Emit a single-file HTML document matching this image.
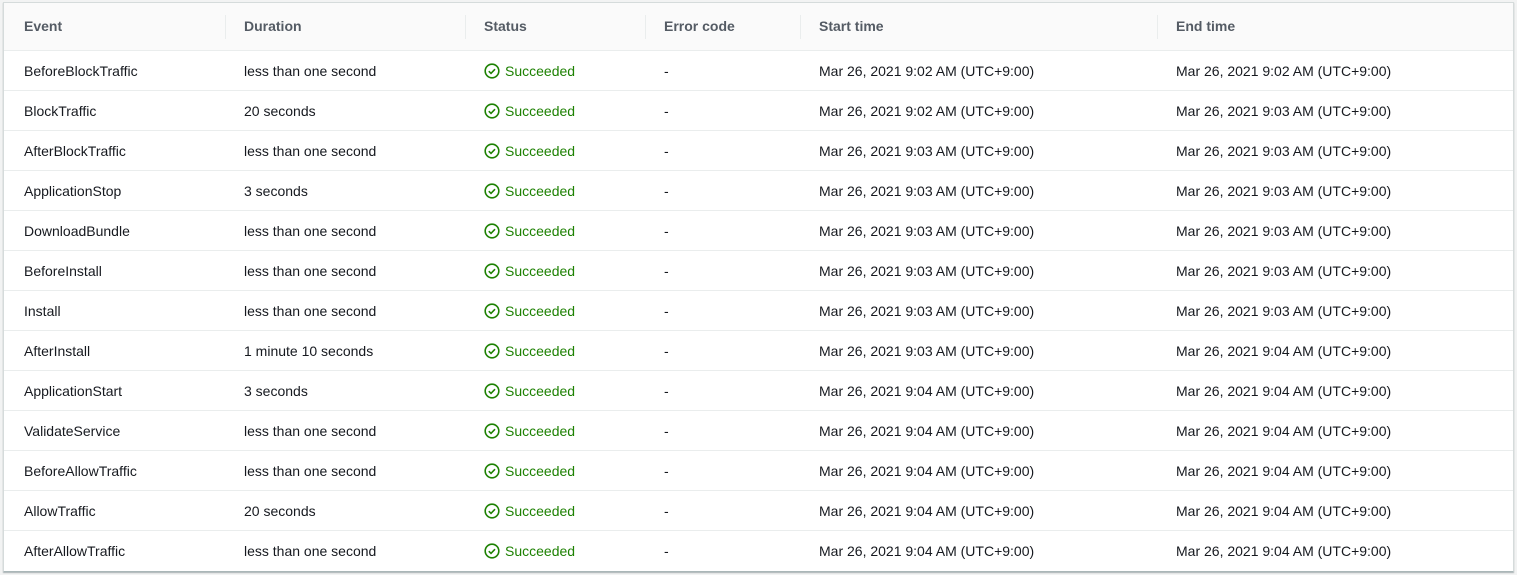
<!DOCTYPE html>
<html><head><style>
body{margin:0;background:#f2f3f3;font-family:"Liberation Sans",sans-serif;}
.box{position:absolute;left:3px;top:2px;width:1509px;height:568px;background:#fff;border:1px solid #d5dbdb;border-bottom-color:#aab7b8;box-shadow:0 1px 1px rgba(0,28,36,.3);overflow:hidden}
.hdr{position:absolute;left:0;top:0;width:100%;height:47px;background:#fafafa;border-bottom:1px solid #eaeded;}
.c{position:absolute;white-space:nowrap;font-size:14px;color:#16191f;line-height:16px}
.h{font-weight:bold;color:#545b64;top:15px}
.div{position:absolute;top:12px;height:24px;width:1px;background:#eaeded}
.row{position:absolute;left:0;width:100%;height:39px;border-bottom:1px solid #eaeded}
.row .c{top:12px}
.ok{color:#1d8102}
.ok svg{position:absolute;left:0;top:0}
.ok span{position:absolute;left:21px;top:0}
</style></head><body><div class="box">
<div class="hdr">
<div class="c h" style="left:20px">Event</div><div class="div" style="left:221px"></div>
<div class="c h" style="left:240px">Duration</div><div class="div" style="left:461px"></div>
<div class="c h" style="left:480px">Status</div><div class="div" style="left:641px"></div>
<div class="c h" style="left:660px">Error code</div><div class="div" style="left:796px"></div>
<div class="c h" style="left:815px">Start time</div><div class="div" style="left:1153px"></div>
<div class="c h" style="left:1172px">End time</div>
</div>

<div class="row" style="top:48px"><div class="c" style="left:20px">BeforeBlockTraffic</div><div class="c" style="left:240px">less than one second</div><div class="c ok" style="left:480px"><svg width="16" height="16" viewBox="0 0 16 16"><circle cx="8" cy="8" r="6.8" fill="none" stroke="#1d8102" stroke-width="1.6"/><path d="M4.8 8.2l2.2 2.2 4-4.2" fill="none" stroke="#1d8102" stroke-width="1.6"/></svg><span>Succeeded</span></div><div class="c" style="left:660px">-</div><div class="c" style="left:815px">Mar 26, 2021 9:02 AM (UTC+9:00)</div><div class="c" style="left:1172px">Mar 26, 2021 9:02 AM (UTC+9:00)</div></div>

<div class="row" style="top:88px"><div class="c" style="left:20px">BlockTraffic</div><div class="c" style="left:240px">20 seconds</div><div class="c ok" style="left:480px"><svg width="16" height="16" viewBox="0 0 16 16"><circle cx="8" cy="8" r="6.8" fill="none" stroke="#1d8102" stroke-width="1.6"/><path d="M4.8 8.2l2.2 2.2 4-4.2" fill="none" stroke="#1d8102" stroke-width="1.6"/></svg><span>Succeeded</span></div><div class="c" style="left:660px">-</div><div class="c" style="left:815px">Mar 26, 2021 9:02 AM (UTC+9:00)</div><div class="c" style="left:1172px">Mar 26, 2021 9:03 AM (UTC+9:00)</div></div>

<div class="row" style="top:128px"><div class="c" style="left:20px">AfterBlockTraffic</div><div class="c" style="left:240px">less than one second</div><div class="c ok" style="left:480px"><svg width="16" height="16" viewBox="0 0 16 16"><circle cx="8" cy="8" r="6.8" fill="none" stroke="#1d8102" stroke-width="1.6"/><path d="M4.8 8.2l2.2 2.2 4-4.2" fill="none" stroke="#1d8102" stroke-width="1.6"/></svg><span>Succeeded</span></div><div class="c" style="left:660px">-</div><div class="c" style="left:815px">Mar 26, 2021 9:03 AM (UTC+9:00)</div><div class="c" style="left:1172px">Mar 26, 2021 9:03 AM (UTC+9:00)</div></div>

<div class="row" style="top:168px"><div class="c" style="left:20px">ApplicationStop</div><div class="c" style="left:240px">3 seconds</div><div class="c ok" style="left:480px"><svg width="16" height="16" viewBox="0 0 16 16"><circle cx="8" cy="8" r="6.8" fill="none" stroke="#1d8102" stroke-width="1.6"/><path d="M4.8 8.2l2.2 2.2 4-4.2" fill="none" stroke="#1d8102" stroke-width="1.6"/></svg><span>Succeeded</span></div><div class="c" style="left:660px">-</div><div class="c" style="left:815px">Mar 26, 2021 9:03 AM (UTC+9:00)</div><div class="c" style="left:1172px">Mar 26, 2021 9:03 AM (UTC+9:00)</div></div>

<div class="row" style="top:208px"><div class="c" style="left:20px">DownloadBundle</div><div class="c" style="left:240px">less than one second</div><div class="c ok" style="left:480px"><svg width="16" height="16" viewBox="0 0 16 16"><circle cx="8" cy="8" r="6.8" fill="none" stroke="#1d8102" stroke-width="1.6"/><path d="M4.8 8.2l2.2 2.2 4-4.2" fill="none" stroke="#1d8102" stroke-width="1.6"/></svg><span>Succeeded</span></div><div class="c" style="left:660px">-</div><div class="c" style="left:815px">Mar 26, 2021 9:03 AM (UTC+9:00)</div><div class="c" style="left:1172px">Mar 26, 2021 9:03 AM (UTC+9:00)</div></div>

<div class="row" style="top:248px"><div class="c" style="left:20px">BeforeInstall</div><div class="c" style="left:240px">less than one second</div><div class="c ok" style="left:480px"><svg width="16" height="16" viewBox="0 0 16 16"><circle cx="8" cy="8" r="6.8" fill="none" stroke="#1d8102" stroke-width="1.6"/><path d="M4.8 8.2l2.2 2.2 4-4.2" fill="none" stroke="#1d8102" stroke-width="1.6"/></svg><span>Succeeded</span></div><div class="c" style="left:660px">-</div><div class="c" style="left:815px">Mar 26, 2021 9:03 AM (UTC+9:00)</div><div class="c" style="left:1172px">Mar 26, 2021 9:03 AM (UTC+9:00)</div></div>

<div class="row" style="top:288px"><div class="c" style="left:20px">Install</div><div class="c" style="left:240px">less than one second</div><div class="c ok" style="left:480px"><svg width="16" height="16" viewBox="0 0 16 16"><circle cx="8" cy="8" r="6.8" fill="none" stroke="#1d8102" stroke-width="1.6"/><path d="M4.8 8.2l2.2 2.2 4-4.2" fill="none" stroke="#1d8102" stroke-width="1.6"/></svg><span>Succeeded</span></div><div class="c" style="left:660px">-</div><div class="c" style="left:815px">Mar 26, 2021 9:03 AM (UTC+9:00)</div><div class="c" style="left:1172px">Mar 26, 2021 9:03 AM (UTC+9:00)</div></div>

<div class="row" style="top:328px"><div class="c" style="left:20px">AfterInstall</div><div class="c" style="left:240px">1 minute 10 seconds</div><div class="c ok" style="left:480px"><svg width="16" height="16" viewBox="0 0 16 16"><circle cx="8" cy="8" r="6.8" fill="none" stroke="#1d8102" stroke-width="1.6"/><path d="M4.8 8.2l2.2 2.2 4-4.2" fill="none" stroke="#1d8102" stroke-width="1.6"/></svg><span>Succeeded</span></div><div class="c" style="left:660px">-</div><div class="c" style="left:815px">Mar 26, 2021 9:03 AM (UTC+9:00)</div><div class="c" style="left:1172px">Mar 26, 2021 9:04 AM (UTC+9:00)</div></div>

<div class="row" style="top:368px"><div class="c" style="left:20px">ApplicationStart</div><div class="c" style="left:240px">3 seconds</div><div class="c ok" style="left:480px"><svg width="16" height="16" viewBox="0 0 16 16"><circle cx="8" cy="8" r="6.8" fill="none" stroke="#1d8102" stroke-width="1.6"/><path d="M4.8 8.2l2.2 2.2 4-4.2" fill="none" stroke="#1d8102" stroke-width="1.6"/></svg><span>Succeeded</span></div><div class="c" style="left:660px">-</div><div class="c" style="left:815px">Mar 26, 2021 9:04 AM (UTC+9:00)</div><div class="c" style="left:1172px">Mar 26, 2021 9:04 AM (UTC+9:00)</div></div>

<div class="row" style="top:408px"><div class="c" style="left:20px">ValidateService</div><div class="c" style="left:240px">less than one second</div><div class="c ok" style="left:480px"><svg width="16" height="16" viewBox="0 0 16 16"><circle cx="8" cy="8" r="6.8" fill="none" stroke="#1d8102" stroke-width="1.6"/><path d="M4.8 8.2l2.2 2.2 4-4.2" fill="none" stroke="#1d8102" stroke-width="1.6"/></svg><span>Succeeded</span></div><div class="c" style="left:660px">-</div><div class="c" style="left:815px">Mar 26, 2021 9:04 AM (UTC+9:00)</div><div class="c" style="left:1172px">Mar 26, 2021 9:04 AM (UTC+9:00)</div></div>

<div class="row" style="top:448px"><div class="c" style="left:20px">BeforeAllowTraffic</div><div class="c" style="left:240px">less than one second</div><div class="c ok" style="left:480px"><svg width="16" height="16" viewBox="0 0 16 16"><circle cx="8" cy="8" r="6.8" fill="none" stroke="#1d8102" stroke-width="1.6"/><path d="M4.8 8.2l2.2 2.2 4-4.2" fill="none" stroke="#1d8102" stroke-width="1.6"/></svg><span>Succeeded</span></div><div class="c" style="left:660px">-</div><div class="c" style="left:815px">Mar 26, 2021 9:04 AM (UTC+9:00)</div><div class="c" style="left:1172px">Mar 26, 2021 9:04 AM (UTC+9:00)</div></div>

<div class="row" style="top:488px"><div class="c" style="left:20px">AllowTraffic</div><div class="c" style="left:240px">20 seconds</div><div class="c ok" style="left:480px"><svg width="16" height="16" viewBox="0 0 16 16"><circle cx="8" cy="8" r="6.8" fill="none" stroke="#1d8102" stroke-width="1.6"/><path d="M4.8 8.2l2.2 2.2 4-4.2" fill="none" stroke="#1d8102" stroke-width="1.6"/></svg><span>Succeeded</span></div><div class="c" style="left:660px">-</div><div class="c" style="left:815px">Mar 26, 2021 9:04 AM (UTC+9:00)</div><div class="c" style="left:1172px">Mar 26, 2021 9:04 AM (UTC+9:00)</div></div>

<div class="row" style="top:528px;border-bottom:none"><div class="c" style="left:20px">AfterAllowTraffic</div><div class="c" style="left:240px">less than one second</div><div class="c ok" style="left:480px"><svg width="16" height="16" viewBox="0 0 16 16"><circle cx="8" cy="8" r="6.8" fill="none" stroke="#1d8102" stroke-width="1.6"/><path d="M4.8 8.2l2.2 2.2 4-4.2" fill="none" stroke="#1d8102" stroke-width="1.6"/></svg><span>Succeeded</span></div><div class="c" style="left:660px">-</div><div class="c" style="left:815px">Mar 26, 2021 9:04 AM (UTC+9:00)</div><div class="c" style="left:1172px">Mar 26, 2021 9:04 AM (UTC+9:00)</div></div>

</div></body></html>
